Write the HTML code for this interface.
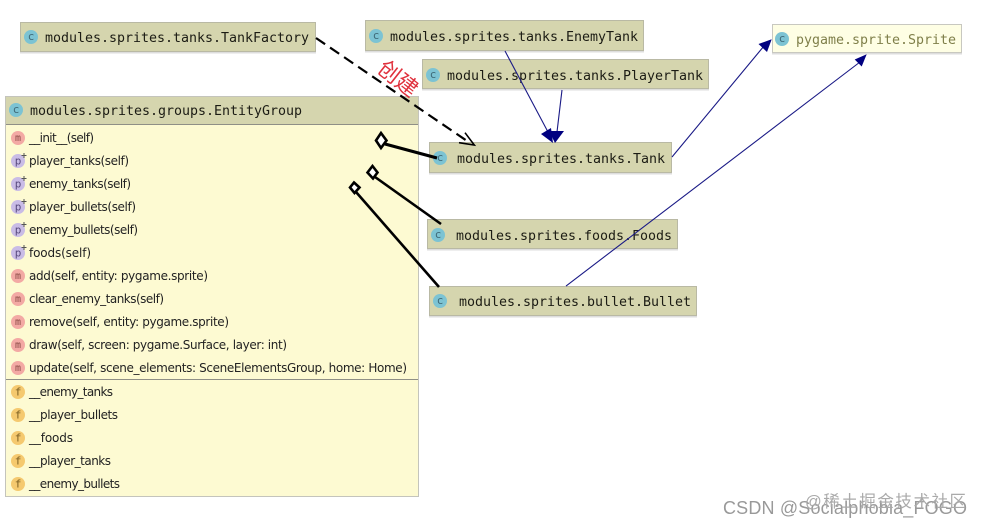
<!DOCTYPE html>
<html><head><meta charset="utf-8"><style>
html,body{margin:0;padding:0;background:#fff;width:983px;height:528px;overflow:hidden}
svg{display:block;filter:blur(.3px)}
.h{font:13.3px "DejaVu Sans Mono","Liberation Mono",monospace;fill:#1c1c14}
.m{font:12px "DejaVu Sans","Liberation Sans",sans-serif;fill:#222}
.i{font:11px "DejaVu Sans Mono","Liberation Mono",monospace;text-anchor:middle}
</style></head><body>
<svg width="983" height="528" viewBox="0 0 983 528" xmlns="http://www.w3.org/2000/svg">
<defs>
<g id="c"><circle r="7" fill="#7cc3d3"/><text class="i" y="3.2" fill="#3f6a78">c</text></g>
<g id="mi"><circle r="7" fill="#f3a9a4"/><text class="i" y="3" fill="#8a4a46" style="font-size:10px">m</text></g>
<g id="p"><circle r="7" fill="#c9bce6"/><text class="i" y="3.5" fill="#5a4c80">p</text><path d="M3.500 -5.500h5M6 -8v5" stroke="#555" stroke-width="1"/></g>
<g id="f"><circle r="7" fill="#f5c96f"/><text class="i" y="3.500" fill="#7b5f22">f</text></g>
</defs>

<!-- EntityGroup -->
<rect x="5.5" y="96.5" width="413" height="400" fill="#fdfad2" stroke="#c4c4bc"/>
<rect x="6" y="97" width="412" height="27" fill="#d5d5ae"/>
<path d="M6 124.5H418M6 379.5H418" stroke="#8f8f86"/>
<use href="#c" x="16" y="110"/>
<text class="h" x="30" y="115" textLength="272">modules.sprites.groups.EntityGroup</text>

<use href="#mi" x="18" y="138"/><text class="m" x="29" y="142" textLength="65">__init__(self)</text>
<use href="#p" x="18" y="161"/><text class="m" x="29" y="165" textLength="100">player_tanks(self)</text>
<use href="#p" x="18" y="184"/><text class="m" x="29" y="188" textLength="102">enemy_tanks(self)</text>
<use href="#p" x="18" y="207"/><text class="m" x="29" y="211" textLength="107">player_bullets(self)</text>
<use href="#p" x="18" y="230"/><text class="m" x="29" y="234" textLength="109">enemy_bullets(self)</text>
<use href="#p" x="18" y="253"/><text class="m" x="29" y="257" textLength="62">foods(self)</text>
<use href="#mi" x="18" y="276"/><text class="m" x="29" y="280" textLength="179">add(self, entity: pygame.sprite)</text>
<use href="#mi" x="18" y="299"/><text class="m" x="29" y="303" textLength="135">clear_enemy_tanks(self)</text>
<use href="#mi" x="18" y="322"/><text class="m" x="29" y="326" textLength="200">remove(self, entity: pygame.sprite)</text>
<use href="#mi" x="18" y="345"/><text class="m" x="29" y="349" textLength="258">draw(self, screen: pygame.Surface, layer: int)</text>
<use href="#mi" x="18" y="368"/><text class="m" x="29" y="372" textLength="378">update(self, scene_elements: SceneElementsGroup, home: Home)</text>

<use href="#f" x="18" y="392"/><text class="m" x="29" y="396" textLength="84">__enemy_tanks</text>
<use href="#f" x="18" y="415"/><text class="m" x="29" y="419" textLength="89">__player_bullets</text>
<use href="#f" x="18" y="438"/><text class="m" x="29" y="442" textLength="44">__foods</text>
<use href="#f" x="18" y="461"/><text class="m" x="29" y="465" textLength="82">__player_tanks</text>
<use href="#f" x="18" y="484"/><text class="m" x="29" y="488" textLength="91">__enemy_bullets</text>

<!-- class boxes -->
<g fill="#d5d5ae" stroke="#b9b9a4">
<rect x="20.5" y="22.5" width="295" height="29"/>
<rect x="365.5" y="20.5" width="278" height="30"/>
<rect x="422.5" y="59.5" width="286" height="29"/>
<rect x="429.5" y="142.5" width="242" height="30"/>
<rect x="427.5" y="219.5" width="250" height="29"/>
<rect x="429.5" y="286.5" width="267" height="29"/>
</g>
<rect x="772.5" y="24.5" width="189" height="28" fill="#fefee4" stroke="#c8c8c0"/>
<g fill="#ddd">
<rect x="20" y="52" width="296" height="1.5"/><rect x="365" y="51" width="279" height="1.5"/>
<rect x="422" y="89" width="287" height="1.5"/><rect x="429" y="173" width="243" height="1.5"/>
<rect x="427" y="249" width="251" height="1.5"/><rect x="429" y="316" width="268" height="1.5"/>
<rect x="772" y="53" width="190" height="1.5"/>
</g>

<use href="#c" x="31" y="37"/><text class="h" x="45" y="42" textLength="264">modules.sprites.tanks.TankFactory</text>
<use href="#c" x="376" y="36"/><text class="h" x="390" y="41" textLength="248">modules.sprites.tanks.EnemyTank</text>
<use href="#c" x="433" y="75"/><text class="h" x="447" y="80" textLength="256">modules.sprites.tanks.PlayerTank</text>
<use href="#c" x="440" y="158"/><text class="h" x="457" y="163" textLength="208">modules.sprites.tanks.Tank</text>
<use href="#c" x="438" y="235"/><text class="h" x="456" y="240" textLength="216">modules.sprites.foods.Foods</text>
<use href="#c" x="440" y="301"/><text class="h" x="459" y="306" textLength="232">modules.sprites.bullet.Bullet</text>
<use href="#c" x="782" y="39"/><text class="h" x="796" y="44" textLength="160" style="fill:#7f7f4a">pygame.sprite.Sprite</text>

<!-- inheritance -->
<g stroke="#1a1a86" stroke-width="1.1" fill="none">
<path d="M505 51L548 132M562 90L557 132M672 157L764 46M566 286L860 62"/>
</g>
<g fill="#000080">
<path d="M553 143L541 134L551 128Z"/>
<path d="M555 143L549 131L564 131Z"/>
<path d="M771.700 39.300L767 52L758.500 44Z"/>
<path d="M866.700 54.300L861.700 66.500L854.700 59.500Z"/>
</g>

<!-- creates -->
<path d="M316 38L470 143" stroke="#000" stroke-width="2.2" stroke-dasharray="11 6" fill="none"/>
<path d="M465 132.700L474.300 145L459 142.700" stroke="#000" stroke-width="1.6" fill="none"/>

<!-- aggregation -->
<g stroke="#000" fill="#fff">
<path d="M385 144L437 158" stroke-width="3.2" fill="none"/>
<path d="M375 177L441 224" stroke-width="2.6" fill="none"/>
<path d="M356 192L439 287" stroke-width="2.6" fill="none"/>
<path d="M381 133L386.500 140.500L381 148L376 140.500Z" stroke-width="2.6"/>
<path d="M372.500 166L377.500 172.500L373 178.500L367.500 172.500Z" stroke-width="2.6"/>
<path d="M354 182.500L359.500 187.500L354.500 193L350 187.500Z" stroke-width="2.6"/>
</g>

<text x="0" y="0" transform="translate(376 71) rotate(38)" style="font:22px 'Noto Sans CJK SC','WenQuanYi Zen Hei',sans-serif;fill:#e0303c">创建</text>

<!-- watermarks -->
<text x="723" y="514" style="font:18px 'Liberation Sans',sans-serif;fill:#999" textLength="244">CSDN @Socialphobia_FOGO</text>
<text x="805" y="507" style="font:16.500px 'Liberation Sans','Noto Sans CJK SC',sans-serif;fill:#aaa" textLength="161">@稀土掘金技术社区</text>
</svg>
</body></html>
